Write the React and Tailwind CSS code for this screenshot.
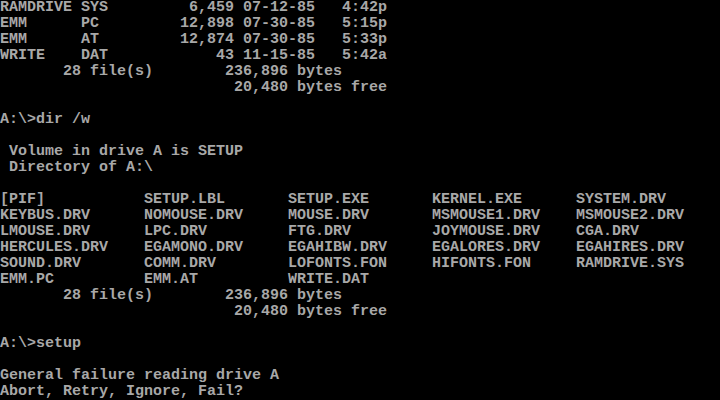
const rows = [
  "RAMDRIVE SYS         6,459 07-12-85   4:42p",
  "EMM      PC         12,898 07-30-85   5:15p",
  "EMM      AT         12,874 07-30-85   5:33p",
  "WRITE    DAT            43 11-15-85   5:42a",
  "       28 file(s)        236,896 bytes",
  "                          20,480 bytes free",
  "",
  "A:\\>dir /w",
  "",
  " Volume in drive A is SETUP",
  " Directory of A:\\",
  "",
  "[PIF]           SETUP.LBL       SETUP.EXE       KERNEL.EXE      SYSTEM.DRV",
  "KEYBUS.DRV      NOMOUSE.DRV     MOUSE.DRV       MSMOUSE1.DRV    MSMOUSE2.DRV",
  "LMOUSE.DRV      LPC.DRV         FTG.DRV         JOYMOUSE.DRV    CGA.DRV",
  "HERCULES.DRV    EGAMONO.DRV     EGAHIBW.DRV     EGALORES.DRV    EGAHIRES.DRV",
  "SOUND.DRV       COMM.DRV        LOFONTS.FON     HIFONTS.FON     RAMDRIVE.SYS",
  "EMM.PC          EMM.AT          WRITE.DAT",
  "       28 file(s)        236,896 bytes",
  "                          20,480 bytes free",
  "",
  "A:\\>setup",
  "",
  "General failure reading drive A",
  "Abort, Retry, Ignore, Fail?",
];

export default function App() {
  return (
    <div
      className="w-[720px] h-[400px] overflow-hidden bg-black text-[#a8a8a8] text-[15px] leading-4 font-bold"
      style={{ fontFamily: '"Liberation Mono", "DejaVu Sans Mono", monospace' }}
    >
      {rows.map((line, i) => (
        <div key={i} className="h-4 whitespace-pre">
          {line}
        </div>
      ))}
    </div>
  );
}
